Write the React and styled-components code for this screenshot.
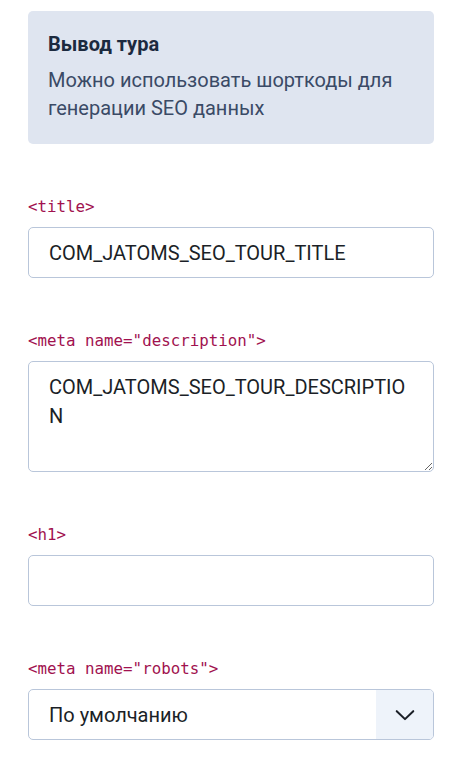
import React from 'react';
import styled, { createGlobalStyle } from 'styled-components';

const GlobalStyle = createGlobalStyle`
    body {
        margin: 0;
        background: #ffffff;
        font-family: Roboto, "Noto Sans", sans-serif;
    }
`;

const Page = styled.div`
    display: flex;
    flex-direction: column;
    gap: 53px;
    padding: 11px 28px 20px 28px;
`;

const Alert = styled.div`
    display: flex;
    flex-direction: column;
    gap: 10px;
    padding: 21px 20px 22px 20px;
    border-radius: 5px;
    background-color: #dfe5f0;
`;

const AlertTitle = styled.h4`
    margin: 0;
    font-size: 20px;
    font-weight: 700;
    line-height: 24px;
    color: #1c2a3f;
`;

const AlertText = styled.p`
    margin: 0;
    font-size: 20px;
    line-height: 28px;
    color: #3a4a66;
`;

const Field = styled.div`
    display: flex;
    flex-direction: column;
    gap: 10px;
`;

const Label = styled.label`
    font-family: "DejaVu Sans Mono", "Liberation Mono", monospace;
    font-size: 15.8px;
    line-height: 20px;
    color: #a1124f;
`;

const controlBase = `
    box-sizing: border-box;
    width: 100%;
    margin: 0;
    border: 1px solid #b9c6da;
    border-radius: 5px;
    background-color: #ffffff;
    font-family: Roboto, "Noto Sans", sans-serif;
    font-size: 20px;
    color: #1b1f27;
    outline: none;
`;

const TextInput = styled.input`
    ${controlBase}
    height: 51px;
    padding: 0 20px;
`;

const TextArea = styled.textarea`
    ${controlBase}
    height: 111px;
    padding: 11px 20px;
    line-height: 29px;
    resize: vertical;
    word-break: break-all;
`;

const SelectWrap = styled.div`
    ${controlBase}
    display: flex;
    align-items: stretch;
    height: 51px;
    overflow: hidden;
`;

const SelectValue = styled.div`
    flex: 1;
    display: flex;
    align-items: center;
    padding: 0 20px;
`;

const SelectCaret = styled.div`
    display: flex;
    align-items: center;
    justify-content: center;
    width: 57px;
    background-color: #eef3fa;
`;

const fields = [
    { label: '<title>', value: 'COM_JATOMS_SEO_TOUR_TITLE' },
    { label: '<meta name="description">', value: 'COM_JATOMS_SEO_TOUR_DESCRIPTION', multi: true },
    { label: '<h1>', value: '' },
];

export default function App() {
    return (
        <>
            <GlobalStyle />
            <Page>
                <Alert>
                    <AlertTitle>Вывод тура</AlertTitle>
                    <AlertText>Можно использовать шорткоды для генерации SEO данных</AlertText>
                </Alert>
                {fields.map(f => (
                    <Field key={f.label}>
                        <Label>{f.label}</Label>
                        {f.multi
                            ? <TextArea defaultValue={f.value} />
                            : <TextInput defaultValue={f.value} />}
                    </Field>
                ))}
                <Field>
                    <Label>&lt;meta name="robots"&gt;</Label>
                    <SelectWrap>
                        <SelectValue>По умолчанию</SelectValue>
                        <SelectCaret>
                            {/* select chevron */}
                            <svg width="22" height="22" viewBox="0 0 16 16" fill="none"
                                 stroke="#1b1f27" strokeWidth="1.5" strokeLinecap="round" strokeLinejoin="round">
                                <path d="M2 5.2 8 11l6-5.8" />
                            </svg>
                        </SelectCaret>
                    </SelectWrap>
                </Field>
            </Page>
        </>
    );
}
